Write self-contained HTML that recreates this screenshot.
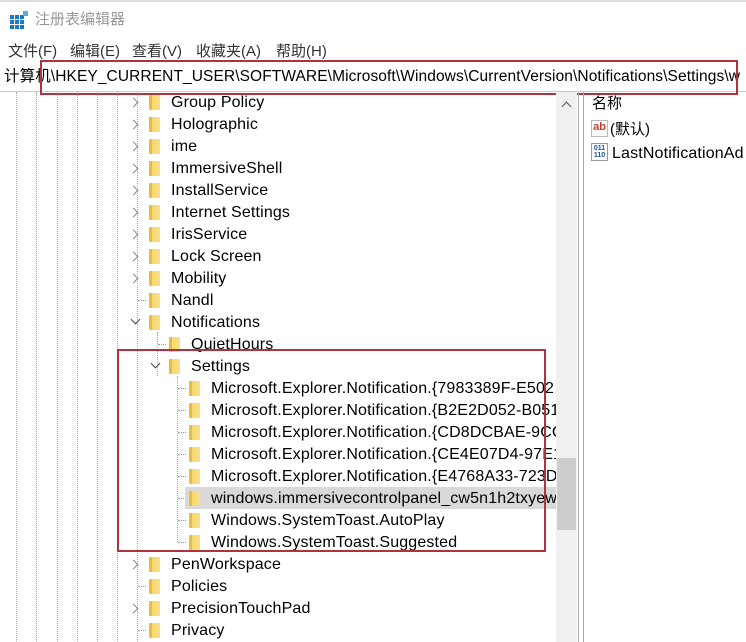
<!DOCTYPE html>
<html><head><meta charset="utf-8"><style>
*{margin:0;padding:0;box-sizing:border-box}
body{width:746px;height:642px;background:#fff;position:relative;overflow:hidden;font-family:"Liberation Sans","Noto Sans CJK SC",sans-serif;color:#000}
.a{position:absolute;white-space:nowrap}
.t{font-size:16px;line-height:22px;letter-spacing:0.15px}
.f{position:absolute;width:11px;height:15px;background:linear-gradient(90deg,#e9bd3c 0,#e9bd3c 3px,#f7d772 3px,#f9de85 100%);border-radius:1px}
.ar{position:absolute;width:7px;height:7px;border-right:1.3px solid #888;border-bottom:1.3px solid #888}
.dv{position:absolute;top:92px;bottom:0;width:0;border-left:1px dotted #aaa}
.dh{position:absolute;height:0;width:8px;border-top:1px dotted #999}
</style></head><body>
<div class="a" style="left:0;top:0;width:746px;height:2px;background:#ddd"></div>
<svg class="a" style="left:10px;top:10px" width="20" height="20" viewBox="0 0 20 20">
<rect x="0" y="5" width="4" height="4" fill="#1a78c2"/><rect x="5" y="5" width="4" height="4" fill="#1a78c2"/><rect x="10" y="5" width="4" height="4" fill="#1a78c2"/>
<rect x="0" y="10" width="4" height="4" fill="#1a78c2"/><rect x="5" y="10" width="4" height="4" fill="#1a78c2"/><rect x="10" y="10" width="4" height="4" fill="#1a78c2"/>
<rect x="0" y="15" width="4" height="4" fill="#1a78c2"/><rect x="5" y="15" width="4" height="4" fill="#1a78c2"/><rect x="10" y="15" width="4" height="4" fill="#1a78c2"/>
<rect x="13" y="1" width="5" height="5" fill="#5aa8e0"/></svg>
<div class="a" style="left:35px;top:8px;font-size:15px;color:#999">注册表编辑器</div>
<div class="a" style="left:8px;top:40px;font-size:15px;color:#333">文件(F)</div>
<div class="a" style="left:70px;top:40px;font-size:15px;color:#333">编辑(E)</div>
<div class="a" style="left:132px;top:40px;font-size:15px;color:#333">查看(V)</div>
<div class="a" style="left:196px;top:40px;font-size:15px;color:#333">收藏夹(A)</div>
<div class="a" style="left:276px;top:40px;font-size:15px;color:#333">帮助(H)</div>
<div class="a" style="left:0;top:63px;width:746px;height:29px;border-bottom:1px solid #ccc"></div>
<div class="a" style="left:4px;top:66px;font-size:15.5px;line-height:22px;letter-spacing:0.1px">计算机\HKEY_CURRENT_USER\SOFTWARE\Microsoft\Windows\CurrentVersion\Notifications\Settings\w</div>
<div class="a" style="left:40px;top:60px;width:698px;height:35px;border:2px solid #b0313f"></div>
<div class="dv" style="left:16px"></div><div class="dv" style="left:36px"></div><div class="dv" style="left:57px"></div><div class="dv" style="left:77px"></div><div class="dv" style="left:97px"></div><div class="dv" style="left:117px"></div>
<div class="a" style="left:137px;top:92px;height:550px;border-left:1px dotted #aaa"></div>
<div class="a" style="left:157px;top:332px;height:44px;border-left:1px dotted #aaa"></div>
<div class="a" style="left:177px;top:376px;height:166px;border-left:1px dotted #aaa"></div>
<div class="dh" style="left:138px;top:300px"></div><div class="dh" style="left:158px;top:344px"></div>
<div class="dh" style="left:178px;top:388px"></div><div class="dh" style="left:178px;top:410px"></div><div class="dh" style="left:178px;top:432px"></div><div class="dh" style="left:178px;top:454px"></div><div class="dh" style="left:178px;top:476px"></div><div class="dh" style="left:178px;top:498px"></div><div class="dh" style="left:178px;top:520px"></div><div class="dh" style="left:178px;top:542px"></div>
<div class="dh" style="left:138px;top:586px"></div><div class="dh" style="left:138px;top:630px"></div>
<div class="a" style="left:185px;top:487px;width:371px;height:22px;background:#d9d9d9"></div>
<div class="ar" style="left:130px;top:99px;transform:rotate(-45deg)"></div>
<div class="ar" style="left:130px;top:121px;transform:rotate(-45deg)"></div>
<div class="ar" style="left:130px;top:143px;transform:rotate(-45deg)"></div>
<div class="ar" style="left:130px;top:165px;transform:rotate(-45deg)"></div>
<div class="ar" style="left:130px;top:187px;transform:rotate(-45deg)"></div>
<div class="ar" style="left:130px;top:209px;transform:rotate(-45deg)"></div>
<div class="ar" style="left:130px;top:231px;transform:rotate(-45deg)"></div>
<div class="ar" style="left:130px;top:253px;transform:rotate(-45deg)"></div>
<div class="ar" style="left:130px;top:275px;transform:rotate(-45deg)"></div>
<div class="ar" style="left:132px;top:316px;transform:rotate(45deg);border-color:#444;border-width:0 1.6px 1.6px 0"></div>
<div class="ar" style="left:152px;top:360px;transform:rotate(45deg);border-color:#444;border-width:0 1.6px 1.6px 0"></div>
<div class="ar" style="left:130px;top:561px;transform:rotate(-45deg)"></div>
<div class="ar" style="left:130px;top:605px;transform:rotate(-45deg)"></div>
<div class="f" style="left:149px;top:95px"></div><div class="f" style="left:149px;top:117px"></div><div class="f" style="left:149px;top:139px"></div><div class="f" style="left:149px;top:161px"></div><div class="f" style="left:149px;top:183px"></div><div class="f" style="left:149px;top:205px"></div><div class="f" style="left:149px;top:227px"></div><div class="f" style="left:149px;top:249px"></div><div class="f" style="left:149px;top:271px"></div><div class="f" style="left:149px;top:293px"></div><div class="f" style="left:149px;top:315px"></div>
<div class="f" style="left:169px;top:337px"></div><div class="f" style="left:169px;top:359px"></div>
<div class="f" style="left:189px;top:381px"></div><div class="f" style="left:189px;top:403px"></div><div class="f" style="left:189px;top:425px"></div><div class="f" style="left:189px;top:447px"></div><div class="f" style="left:189px;top:469px"></div><div class="f" style="left:189px;top:491px"></div><div class="f" style="left:189px;top:513px"></div><div class="f" style="left:189px;top:535px"></div>
<div class="f" style="left:149px;top:557px"></div><div class="f" style="left:149px;top:579px"></div><div class="f" style="left:149px;top:601px"></div><div class="f" style="left:149px;top:623px"></div>
<div class="a t" style="left:171px;top:92px">Group Policy<br>Holographic<br>ime<br>ImmersiveShell<br>InstallService<br>Internet Settings<br>IrisService<br>Lock Screen<br>Mobility<br>Nandl<br>Notifications</div>
<div class="a t" style="left:191px;top:334px">QuietHours<br>Settings</div>
<div class="a" style="left:211px;top:378px;width:345px;overflow:hidden"><div class="t">Microsoft.Explorer.Notification.{7983389F-E502<br>Microsoft.Explorer.Notification.{B2E2D052-B051<br>Microsoft.Explorer.Notification.{CD8DCBAE-9CC<br>Microsoft.Explorer.Notification.{CE4E07D4-97E1<br>Microsoft.Explorer.Notification.{E4768A33-723D<br>windows.immersivecontrolpanel_cw5n1h2txyewy<br>Windows.SystemToast.AutoPlay<br>Windows.SystemToast.Suggested</div></div>
<div class="a t" style="left:171px;top:554px">PenWorkspace<br>Policies<br>PrecisionTouchPad<br>Privacy</div>
<div class="a" style="left:117px;top:349px;width:429px;height:203px;border:2px solid #b0313f"></div>
<div class="a" style="left:556px;top:92px;width:21px;height:550px;background:#f0f0f0"></div>
<div class="ar" style="left:563px;top:103px;transform:rotate(-135deg);border-color:#555"></div>
<div class="a" style="left:557px;top:458px;width:19px;height:72px;background:#cdcdcd"></div>
<div class="a" style="left:578px;top:92px;width:1px;height:550px;background:#aaa"></div>
<div class="a" style="left:583px;top:92px;width:1px;height:550px;background:#aaa"></div>
<div class="a" style="left:592px;top:94px;font-size:15px;line-height:20px">名称</div>
<div class="a" style="left:591px;top:120px;width:17px;height:17px;border:1px solid #bbb;background:#fff;color:#c4402a;font-size:11px;font-weight:bold;line-height:13px;text-align:center">ab</div>
<div class="a" style="left:610px;top:119px;font-size:15px;line-height:22px">(默认)</div>
<div class="a" style="left:591px;top:143px;width:17px;height:18px;border:1px solid #999;background:#fff;color:#1d4fa8;font-size:7px;font-weight:bold;line-height:7px;text-align:center;padding-top:1px">011<br>110</div>
<div class="a t" style="left:612px;top:143px">LastNotificationAd</div>
</body></html>
